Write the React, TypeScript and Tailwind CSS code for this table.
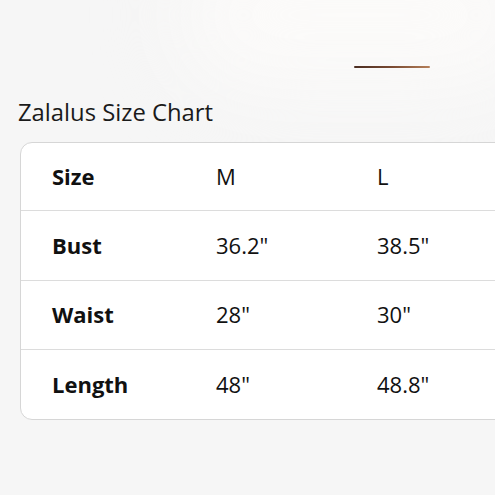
export default function App() {
  const rows = [
    { label: 'Size', m: 'M', l: 'L' },
    { label: 'Bust', m: '36.2"', l: '38.5"' },
    { label: 'Waist', m: '28"', l: '30"' },
    { label: 'Length', m: '48"', l: '48.8"' },
  ];

  return (
    <div
      className="relative w-[495px] h-[495px] overflow-hidden bg-[#f6f6f6] text-[#111]"
      style={{ fontFamily: '"Open Sans", "Noto Sans", sans-serif' }}
    >
      {/* soft photo blob at the top */}
      <div className="absolute -top-[60px] left-[180px] w-[360px] h-[150px] rounded-full bg-[#fbfaf9] blur-2xl"></div>

      <div className="relative pt-[66px]">
        <div className="ml-[354px] w-[76px] h-[2px] rounded-full bg-gradient-to-r from-[#4a2e22] via-[#7a4b33] to-[#b5805a]"></div>

        <h1 className="mt-[30px] ml-[18px] text-[23.8px] leading-[28px] text-[#1a1a1a]">Zalalus Size Chart</h1>

        <div className="mt-[16px] ml-[20px] w-[520px] bg-white border-[1.5px] border-[#d6d6d6] rounded-[12px] overflow-hidden">
          {rows.map((r, i) => (
            <div
              key={r.label}
              className={`flex items-center text-[22px] ${i > 0 ? 'h-[69.5px] border-t-[1.5px] border-[#dcdcdc]' : 'h-[67px]'}`}
            >
              <div className="w-[195px] pl-[31px] font-bold">{r.label}</div>
              <div className="w-[161px]">{r.m}</div>
              <div>{r.l}</div>
            </div>
          ))}
        </div>
      </div>
    </div>
  );
}
